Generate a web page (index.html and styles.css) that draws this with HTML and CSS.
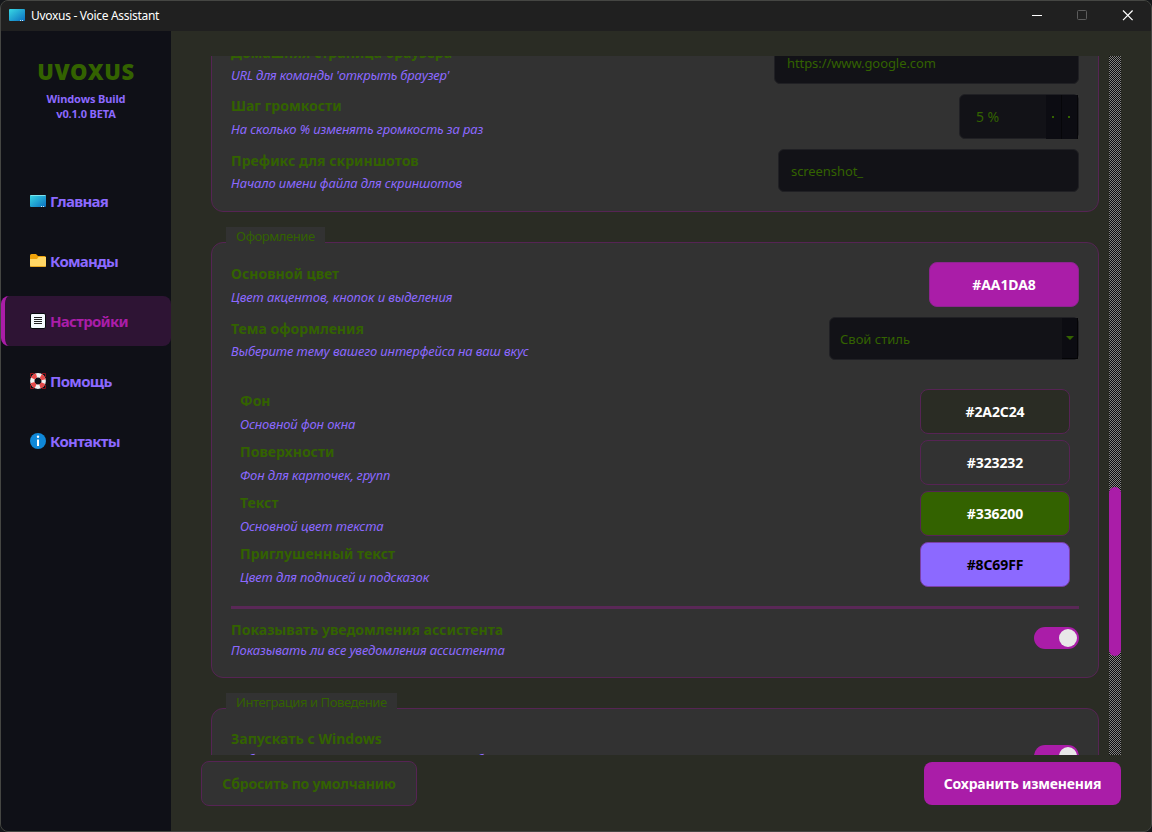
FILE: index.html
```html
<!DOCTYPE html>
<html lang="ru">
<head>
<meta charset="utf-8">
<title>Uvoxus - Voice Assistant</title>
<link rel="stylesheet" href="styles.css">
</head>
<body>
<div class="window">
  <header class="titlebar">
    <svg class="app-icon" width="16" height="12" viewBox="0 0 16 12"><defs><linearGradient id="scr" x1="0" y1="0" x2="1" y2="1"><stop offset="0" stop-color="#38d8e4"/><stop offset="1" stop-color="#0b6fc0"/></linearGradient></defs><rect width="16" height="12" rx="1" fill="url(#scr)"/><path d="M11 11.5h1M13 11.5h1" stroke="#c8e6f5"/></svg>
    <span class="title">Uvoxus - Voice Assistant</span>
    <div class="controls">
      <svg width="12" height="12" viewBox="0 0 12 12"><path d="M0 5.500h10" stroke="#fff"/></svg>
      <svg width="12" height="12" viewBox="0 0 12 12"><rect x=".5" y=".5" width="9" height="9" rx="1" fill="none" stroke="#5c5c5c"/></svg>
      <svg width="12" height="12" viewBox="0 0 12 12"><path d="M1 .5l9.600 9.600M10.600 .5l-9.600 9.600" stroke="#fff" stroke-width="1.200"/></svg>
    </div>
  </header>
  <div class="body">
    <aside class="sidebar">
      <h1 class="logo">UVOXUS</h1>
      <p class="build">Windows Build<br>v0.1.0 BETA</p>
      <nav class="nav">
        <a class="nav-item"><svg width="16" height="16" viewBox="0 0 16 16"><rect y="2" width="16" height="12" rx="1" fill="url(#scr)"/><path d="M.5 2.500h15" stroke="#7fe3ee"/><path d="M11 13.500h1M13 13.500h1" stroke="#c8e6f5"/></svg><span>Главная</span></a>
        <a class="nav-item"><svg width="16" height="16" viewBox="0 0 16 16"><path d="M0 2.500Q0 1 1.500 1H6l2 2h6.500Q16 3 16 4.500V12H0z" fill="#f0a30a"/><path d="M0 6h7l1.500-2H16v8.500q0 1.500-1.500 1.500h-13Q0 14 0 12.500z" fill="#ffd766"/><path d="M.5 13.500h15" stroke="#e9a820"/></svg><span>Команды</span></a>
        <a class="nav-item active"><svg width="16" height="16" viewBox="0 0 16 16"><rect x=".5" y=".5" width="15" height="15" rx="1.500" fill="#f4f9fd" stroke="#06080c"/><path d="M4 4.500h8M4 6.500h8M4 8.500h8M4 10.500h8" stroke="#222"/></svg><span>Настройки</span></a>
        <a class="nav-item"><svg width="16" height="16" viewBox="0 0 16 16"><path d="M.5 4V.5H4M12 .5h3.500V4M15.500 12v3.500H12M4 15.500H.5V12" fill="none" stroke="#8b0f16"/><circle cx="8" cy="8" r="5.700" fill="none" stroke="#f2f2f2" stroke-width="4.400"/><circle cx="8" cy="8" r="5.700" fill="none" stroke="#e84a4a" stroke-width="4.400" stroke-dasharray="4.477 4.477" stroke-dashoffset="-2.238"/></svg><span>Помощь</span></a>
        <a class="nav-item"><svg width="16" height="16" viewBox="0 0 16 16"><circle cx="8" cy="8" r="8" fill="#0f88d8"/><circle cx="8" cy="3.800" r="1.200" fill="#fff"/><path d="M8 6.500V13" stroke="#fff" stroke-width="2"/></svg><span>Контакты</span></a>
      </nav>
    </aside>
    <main class="main">
      <div class="scroll-row">
        <div class="viewport">
          <section class="group first">
            <div class="row h43"><div class="text"><b>Домашняя страница браузера</b><i class="tight">URL для команды 'открыть браузер'</i></div><div class="field url">https://www.google.com</div></div>
            <div class="row h45"><div class="text"><b>Шаг громкости</b><i>На сколько % изменять громкость за раз</i></div><div class="field spin"><span>5 %</span><div class="steps"><div class="step"></div><div class="step"></div></div></div></div>
            <div class="row h43"><div class="text"><b>Префикс для скриншотов</b><i>Начало имени файла для скриншотов</i></div><div class="field prefix">screenshot_</div></div>
          </section>
          <section class="group">
            <h2 class="legend l1">Оформление</h2>
            <div class="row h45"><div class="text"><b>Основной цвет</b><i>Цвет акцентов, кнопок и выделения</i></div><div class="swatch accent">#AA1DA8</div></div>
            <div class="row h43"><div class="text"><b>Тема оформления</b><i>Выберите тему вашего интерфейса на ваш вкус</i></div><div class="field combo"><span>Свой стиль</span><div class="drop"></div></div></div>
            <div class="palette">
              <div class="row h45"><div class="text"><b>Фон</b><i>Основной фон окна</i></div><div class="swatch bg">#2A2C24</div></div>
              <div class="row h45"><div class="text"><b>Поверхности</b><i>Фон для карточек, групп</i></div><div class="swatch surface">#323232</div></div>
              <div class="row h45"><div class="text"><b>Текст</b><i>Основной цвет текста</i></div><div class="swatch ink">#336200</div></div>
              <div class="row h45"><div class="text"><b>Приглушенный текст</b><i>Цвет для подписей и подсказок</i></div><div class="swatch muted">#8C69FF</div></div>
            </div>
            <hr class="divider">
            <div class="row toggle-row"><div class="text"><b>Показывать уведомления ассистента</b><i>Показывать ли все уведомления ассистента</i></div><div class="toggle"></div></div>
          </section>
          <section class="group last">
            <h2 class="legend l2">Интеграция и Поведение</h2>
            <div class="row toggle-row tall"><div class="text"><b>Запускать с Windows</b><i>Добавить ассистента в автозагрузку бота</i></div><div class="toggle"></div></div>
          </section>
        </div>
        <div class="scrollbar"><div class="thumb"></div></div>
      </div>
      <footer class="footer"><button class="btn reset">Сбросить по умолчанию</button><button class="btn save">Сохранить изменения</button></footer>
    </main>
  </div>
</div>
</body>
</html>
```
FILE: styles.css
```css
* { box-sizing: border-box; }
body { margin: 0; width: 1152px; height: 832px; overflow: hidden; background: #15171a; font-family: "Noto Sans", "Open Sans", sans-serif; color: #336200; }
.window { width: 1152px; height: 832px; border: 1px solid #454643; border-radius: 8px; overflow: hidden; background: #2a2c24; display: flex; flex-direction: column; }
.titlebar { height: 30px; flex: none; background: #202020; display: flex; align-items: center; padding-left: 8px; color: #fff; }
.app-icon { margin: -2px 6px 0 0; }
.title { font-size: 12px; line-height: 16px; letter-spacing: -0.3px; }
.controls { margin-left: auto; display: flex; gap: 33px; padding-right: 17px; }
.controls svg { display: block; }
.body { flex: 1; display: flex; min-height: 0; }
.sidebar { width: 170px; background: #0f1017; flex: none; }
.logo { margin: 25px 0 0; font: 900 22px/30px "Noto Sans", sans-serif; letter-spacing: 0.6px; text-align: center; }
.build { margin: 5px 0 0; font-size: 11px; line-height: 15px; font-weight: 700; letter-spacing: -0.12px; text-align: center; color: #8c69ff; }
.nav { margin-top: 55px; display: flex; flex-direction: column; gap: 10px; }
.nav-item { height: 50px; display: flex; align-items: center; gap: 4px; padding-left: 29px; font-size: 15px; font-weight: 700; color: #8c69ff; letter-spacing: -0.7px; }
.nav-item.active { background: #2e1434; color: #aa1da8; border-left: 4px solid #aa1da8; border-radius: 8px; padding-left: 25px; }
.main { flex: 1; min-width: 0; padding: 25px 30px 0; display: flex; flex-direction: column; }
.scroll-row { height: 699px; display: flex; }
.viewport { width: 908px; height: 699px; overflow: hidden; padding: 0 10px; }
.group { position: relative; width: 888px; border: 1px solid #562454; border-radius: 12px; background: #323232; padding: 19px; margin-bottom: 30px; display: flex; flex-direction: column; gap: 10px; }
.group.first { margin-top: -35px; }
.legend { position: absolute; left: 14px; top: -16px; height: 17px; margin: 0; padding: 0 10px; background: #323232; font-size: 13px; font-weight: 400; line-height: 19px; white-space: nowrap; }
.l1 { width: 99px; letter-spacing: -0.45px; }
.l2 { width: 171px; letter-spacing: -0.42px; }
.row { display: flex; justify-content: space-between; align-items: center; }
.h43 { height: 43px; }
.h45 { height: 45px; }
.text { height: 100%; display: grid; grid-template-rows: 1fr 1fr; align-items: center; white-space: nowrap; }
.row.h43 .text, .row.h45 .text { padding-top: 2px; }
.row.h43 .text { height: 45px; align-self: flex-start; }
.text b { font-size: 14px; line-height: 20px; font-weight: 700; letter-spacing: 0.02px; }
.text i { font-size: 13px; line-height: 20px; color: #8c69ff; letter-spacing: -0.12px; }
.text i.tight { letter-spacing: -0.22px; }
.h43 .text b, .h45 .text b { margin-top: -2px; }
.h45 .text i { margin-top: 2px; }
.field { height: 100%; border: 1px solid #202024; border-radius: 6px; background: #121217; font-size: 13px; padding-left: 12px; display: flex; align-items: center; justify-content: space-between; letter-spacing: -0.08px; }
.url { width: 305px; padding-top: 1px; }
.prefix { width: 301px; padding-top: 1px; }
.spin { width: 120px; padding-left: 16px; font-size: 14px; }
.steps { display: flex; height: 44px; }
.step { width: 16px; background: #0c0c12; border-right: 1px solid #060609; display: flex; align-items: center; justify-content: center; padding-right: 2px; }
.step::after { content: ""; width: 2px; height: 2px; background: #336200; }
.combo { width: 250px; padding-left: 10px; letter-spacing: 0; }
.drop { width: 16px; height: 41px; background: #0c0c12; border-right: 1px solid #040406; border-bottom: 1px solid #040406; display: flex; align-items: center; justify-content: center; }
.drop::after { content: ""; border: 4px solid transparent; border-top-color: #336200; border-bottom: 0; }
.swatch { width: 150px; height: 45px; border: 1px solid #562454; border-radius: 8px; display: flex; align-items: center; justify-content: center; font-size: 14px; letter-spacing: -0.1px; padding-bottom: 1px; font-weight: 700; color: #fff; }
.accent { background: #aa1da8; border-color: #8e2490; }
.bg { background: #2a2c24; }
.surface { background: #323232; }
.ink { background: #336200; }
.muted { background: #8c69ff; color: #000; border-color: #7a3fa5; }
.palette { margin-top: 19px; padding: 0 9px; display: flex; flex-direction: column; gap: 6px; }
.divider { width: 848px; height: 3px; margin: 9px 0 0; border: 0; background: #5a2857; }
.toggle-row { height: 39px; }
.toggle-row .text { grid-template-rows: 21px 20px; }
.toggle-row .toggle { margin-top: -2px; }
.tall { height: 56px; }
.tall .text i { letter-spacing: 0.08px; }
.tall .toggle { margin-top: 0; }
.toggle { width: 45px; height: 22px; border-radius: 11px; background: #aa1da8; padding: 2px; display: flex; justify-content: flex-end; }
.toggle::after { content: ""; width: 18px; height: 18px; border-radius: 50%; background: #e8e8e8; }
.scrollbar { width: 12px; height: 699px; padding-top: 431px; background: repeating-conic-gradient(#84847f 0 25%, #0b0b0f 0 50%) 0 0 / 2px 2px; }
.thumb { height: 169px; border-radius: 6px; background: #aa1da8; }
.footer { display: flex; justify-content: space-between; align-items: center; padding-top: 6px; }
.btn { font: 700 14px "Noto Sans", sans-serif; letter-spacing: -0.2px; border-radius: 8px; padding: 0; }
.reset { width: 216px; height: 45px; border: 1px solid #562454; background: #323232; color: #336200; }
.save { width: 197px; height: 43px; border: 0; background: #aa1da8; color: #fff; }
```
